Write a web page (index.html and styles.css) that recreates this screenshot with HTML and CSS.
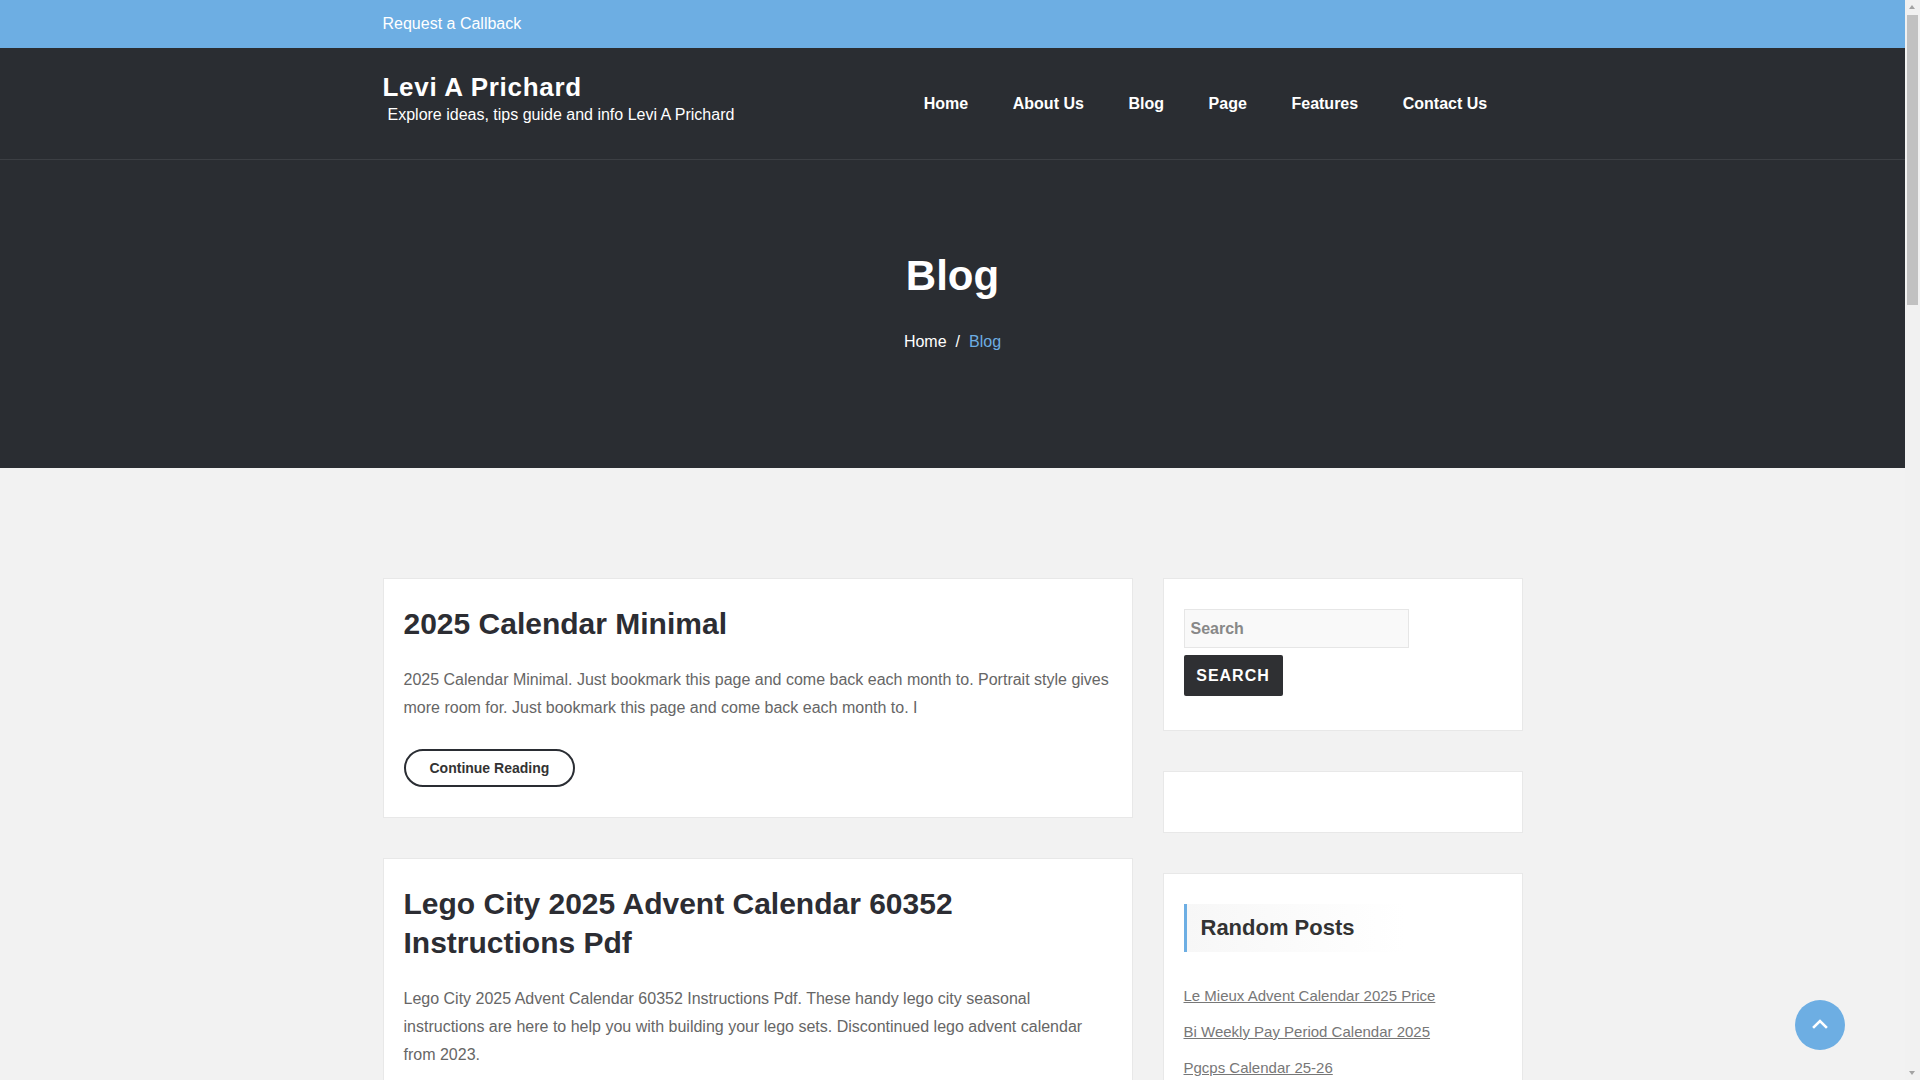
FILE: index.html
```html
<!DOCTYPE html>
<html lang="en">
<head>
<meta charset="utf-8">
<title>Blog – Levi A Prichard</title>
<link rel="stylesheet" href="styles.css">
</head>
<body>
<div class="topbar">
  <div class="container">Request a Callback</div>
</div>
<header class="header">
  <div class="container header-inner">
    <div class="brand">
      <div class="site-title">Levi A Prichard</div>
      <div class="site-desc">Explore ideas, tips guide and info Levi A Prichard</div>
    </div>
    <nav class="nav">
      <a href="#">Home</a>
      <a href="#">About Us</a>
      <a href="#">Blog</a>
      <a href="#">Page</a>
      <a href="#">Features</a>
      <a href="#">Contact Us</a>
    </nav>
  </div>
</header>
<section class="hero">
  <h1 class="hero-title">Blog</h1>
  <div class="crumbs"><a href="#">Home</a><span class="sep">/</span><span class="current">Blog</span></div>
</section>
<main class="main">
  <div class="container layout">
    <div class="posts">
      <article class="card post">
        <h2 class="post-title">2025 Calendar Minimal</h2>
        <p class="excerpt">2025 Calendar Minimal. Just bookmark this page and come back each month to. Portrait style gives more room for. Just bookmark this page and come back each month to. I</p>
        <a class="btn-more" href="#">Continue Reading</a>
      </article>
      <article class="card post">
        <h2 class="post-title">Lego City 2025 Advent Calendar 60352 Instructions Pdf</h2>
        <p class="excerpt">Lego City 2025 Advent Calendar 60352 Instructions Pdf. These handy lego city seasonal instructions are here to help you with building your lego sets. Discontinued lego advent calendar from 2023.</p>
        <a class="btn-more" href="#">Continue Reading</a>
      </article>
      <article class="card post">
        <h2 class="post-title">Bi Weekly Pay Period Calendar 2025</h2>
        <p class="excerpt">Bi Weekly Pay Period Calendar 2025. Plan ahead with a printable pay period calendar that shows every payday of the year at a glance.</p>
        <a class="btn-more" href="#">Continue Reading</a>
      </article>
    </div>
    <aside class="sidebar">
      <div class="card widget widget-search">
        <input class="search-input" type="text" placeholder="Search">
        <button class="search-btn" type="button">SEARCH</button>
      </div>
      <div class="card widget widget-empty"></div>
      <div class="card widget">
        <h3 class="widget-title">Random Posts</h3>
        <ul class="links">
          <li><a href="#">Le Mieux Advent Calendar 2025 Price</a></li>
          <li><a href="#">Bi Weekly Pay Period Calendar 2025</a></li>
          <li><a href="#">Pgcps Calendar 25-26</a></li>
          <li><a href="#">2025 Calendar Minimal</a></li>
          <li><a href="#">Lego City 2025 Advent Calendar 60352 Instructions Pdf</a></li>
        </ul>
      </div>
    </aside>
  </div>
</main>
<a class="to-top" href="#" aria-label="Back to top">
  <svg width="16" height="10" viewBox="0 0 16 10"><path d="M2 8 L8 2 L14 8" fill="none" stroke="#fff" stroke-width="2.6" stroke-linecap="square"/></svg>
</a>
<div class="fake-scrollbar" aria-hidden="true">
  <div class="sb-arrow sb-up"></div>
  <div class="sb-track"><div class="sb-thumb"></div></div>
  <div class="sb-arrow sb-down"></div>
</div>
</body>
</html>
```

FILE: styles.css
```css
* { box-sizing: border-box; }
html, body { margin: 0; padding: 0; }
body {
  font-family: "Liberation Sans", Arial, sans-serif;
  background: #f2f2f2;
  color: #666;
  font-size: 16px;
  margin-right: 15px;
}
a { text-decoration: none; }
.container {
  width: 1170px;
  margin: 0 auto;
  padding: 0 15px;
}
.topbar {
  background: #6daee3;
  color: #fff;
  height: 48px;
  line-height: 48px;
  font-size: 16px;
}
.header {
  background: #2a2d32;
  border-bottom: 1px solid #3c3f44;
}
.header-inner {
  height: 111px;
  display: flex;
  align-items: center;
  justify-content: space-between;
}
.brand {
  padding-bottom: 9px;
}
.site-title {
  color: #fff;
  font-size: 26px;
  font-weight: bold;
  letter-spacing: 0.7px;
  line-height: 30px;
}
.site-desc {
  color: #fff;
  font-size: 16px;
  line-height: 24px;
  margin-left: 5px;
  margin-top: 1px;
}
.nav {
  display: flex;
  margin-right: 13px;
}
.nav a {
  color: #fff;
  font-weight: bold;
  font-size: 16px;
  padding: 0 22.3px;
  line-height: 24px;
}
.hero {
  background: #2a2d32;
  height: 308px;
  padding-top: 91px;
  text-align: center;
}
.hero-title {
  margin: 0;
  color: #fff;
  font-size: 42px;
  line-height: 50px;
  font-weight: bold;
}
.crumbs {
  margin-top: 29px;
  line-height: 24px;
  font-size: 16px;
  color: #fff;
}
.crumbs a { color: #fff; }
.crumbs .sep { margin: 0 9px; }
.crumbs .current { color: #6daee3; }
.main {
  padding: 110px 0 60px;
}
.layout {
  display: grid;
  grid-template-columns: 750px 360px;
  column-gap: 30px;
  align-items: start;
}
.card {
  background: #fff;
  border: 1px solid #e8e8e8;
  margin-bottom: 40px;
}
.post {
  padding: 25px 20px 30px;
}
.post-title {
  margin: 0 0 23px;
  font-size: 30px;
  line-height: 39px;
  font-weight: bold;
  color: #2c2d33;
}
.excerpt {
  margin: 0 0 27px;
  font-size: 16px;
  line-height: 28px;
  color: #666;
}
.btn-more {
  display: inline-block;
  height: 38px;
  line-height: 34px;
  padding: 0 24px;
  border: 2px solid #2a2d33;
  border-radius: 20px;
  color: #333;
  font-weight: bold;
  font-size: 14px;
}
.widget {
  padding: 30px 20px 34px;
}
.widget-search { display: flex; flex-direction: column; align-items: flex-start; }
.search-input {
  width: 225px;
  height: 39px;
  border: 1px solid #e6e6e6;
  background: #f9f9f9;
  padding: 0 6px;
  font-family: "Liberation Sans", Arial, sans-serif;
  font-size: 16px;
  font-weight: bold;
  color: #555;
  outline: none;
}
.search-input::placeholder { color: #888; }
.search-btn {
  margin-top: 7px;
  width: 99px;
  height: 41px;
  border: 0;
  border-radius: 2px;
  background: #2f3033;
  color: #fff;
  font-family: "Liberation Sans", Arial, sans-serif;
  font-weight: bold;
  font-size: 16px;
  letter-spacing: 1px;
  padding: 0;
}
.widget-empty { padding: 30px 20px; }
.widget-title {
  display: inline-block;
  margin: 0;
  height: 48px;
  line-height: 48px;
  padding: 0 50px 0 14px;
  border-left: 3px solid #6daee3;
  background: linear-gradient(to right, #f7f7f7, #ffffff);
  font-size: 22px;
  font-weight: bold;
  color: #333;
}
.links {
  list-style: none;
  margin: 33px 0 0;
  padding: 0;
}
.links li {
  line-height: 22px;
  margin-bottom: 14px;
  font-size: 15px;
}
.links a {
  color: #777;
  text-decoration: underline;
}
.to-top {
  position: fixed;
  right: 75px;
  bottom: 30px;
  width: 50px;
  height: 50px;
  border-radius: 50%;
  background: #6daee3;
  display: flex;
  align-items: center;
  justify-content: center;
}
.to-top svg { margin-top: -3px; }
.fake-scrollbar {
  position: fixed;
  top: 0;
  right: 0;
  width: 15px;
  height: 100vh;
  background: #f1f1f1;
  display: flex;
  flex-direction: column;
}
.sb-arrow {
  height: 15px;
  flex: none;
  position: relative;
}
.sb-up::after, .sb-down::after {
  content: "";
  position: absolute;
  left: 4px;
  border-left: 3.5px solid transparent;
  border-right: 3.5px solid transparent;
}
.sb-up::after { top: 5px; border-bottom: 4px solid #a3a3a3; }
.sb-down::after { top: 6px; border-top: 4px solid #a3a3a3; }
.sb-track { flex: 1; padding: 0 2px; }
.sb-thumb {
  height: 290px;
  background: #c1c1c1;
}
```
